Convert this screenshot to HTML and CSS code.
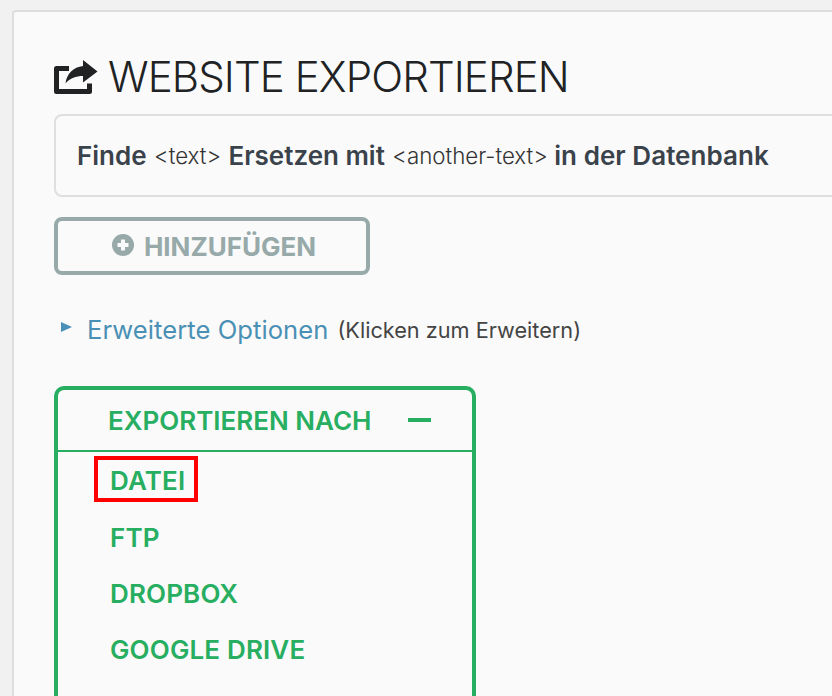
FILE: index.html
```html
<!DOCTYPE html>
<html lang="de">
<head>
<meta charset="utf-8">
<title>Website exportieren</title>
<link rel="stylesheet" href="styles.css">
</head>
<body>
<main class="card">
  <h1 class="title">
    <svg class="title-icon" viewBox="0 0 44 34" aria-hidden="true">
      <path class="share-frame" d="M15 8.500H2.500V31.500H35.500V23.500" />
      <path class="share-arrow" d="M29 0L43.500 11.500L29 22.500V16C22 16 16 18 11.500 23.500C12.500 14 19.500 7 29 6Z" />
    </svg>
    <span>WEBSITE EXPORTIEREN</span>
  </h1>
  <div class="find-box"><b>Finde</b> <small>&lt;text&gt;</small> <b>Ersetzen mit</b> <small>&lt;another-text&gt;</small> <b class="last">in der Datenbank</b></div>
  <button class="add-btn" type="button">
    <svg class="plus" viewBox="0 0 22 22" aria-hidden="true">
      <circle cx="11" cy="11" r="11" />
      <path d="M11 5.500V16.500M5.500 11H16.500" />
    </svg>
    HINZUFÜGEN
  </button>
  <div class="advanced">
    <span class="caret"></span>
    <a class="adv-link">Erweiterte Optionen</a>
    <span class="adv-hint">(Klicken zum Erweitern)</span>
  </div>
  <section class="export">
    <div class="export-head">
      <span>EXPORTIEREN NACH</span>
      <span class="minus"></span>
    </div>
    <ul class="export-list">
      <li><span class="marked">DATEI</span></li>
      <li><span>FTP</span></li>
      <li><span>DROPBOX</span></li>
      <li><span>GOOGLE DRIVE</span></li>
    </ul>
  </section>
</main>
</body>
</html>
```
FILE: styles.css
```css
* { box-sizing: border-box; }
html, body { height: 100%; }
body {
  margin: 0;
  padding: 10px 0 0 12px;
  background: #f1f1f1;
  font-family: Inter, "Noto Sans", sans-serif;
  overflow: hidden;
}
.card {
  width: 900px;
  height: 800px;
  padding: 30px 0 0 40px;
  background: #fafafa;
  border: 2px solid #dedede;
  border-radius: 4px;
}
.title {
  display: flex;
  align-items: center;
  gap: 10px;
  height: 72px;
  margin: 0;
  padding-bottom: 3px;
  font-size: 42px;
  font-weight: 300;
  letter-spacing: -0.900px;
  color: #202224;
}
.title-icon { width: 44px; height: 34px; flex: none; margin-top: 1px; }
.share-frame { fill: none; stroke: #202224; stroke-width: 5; stroke-linejoin: round; }
.share-arrow { fill: #202224; }
.find-box {
  width: 900px;
  height: 83px;
  padding: 0 21px;
  display: flex;
  align-items: center;
  gap: 7.500px;
  background: #fafafa;
  border: 2px solid #dfdfdf;
  border-radius: 8px;
  color: #3a434b;
  font-size: 26px;
  white-space: nowrap;
}
.find-box b { font-weight: 600; }
.find-box small { font-size: 22.300px; font-weight: 300; color: #333; }
.find-box .last { margin-left: -1px; letter-spacing: 0.050px; }
.add-btn {
  display: flex;
  align-items: center;
  justify-content: center;
  gap: 10px;
  width: 316px;
  height: 58px;
  margin-top: 20px;
  padding: 0 0 0 4px;
  background: transparent;
  border: 4px solid #97a9a9;
  border-radius: 8px;
  color: #97a9a9;
  font: 700 26px Inter, sans-serif;
}
.plus { width: 22px; height: 22px; margin-top: -3px; }
.plus circle { fill: #97a9a9; }
.plus path { stroke: #fafafa; stroke-width: 4; fill: none; }
.advanced {
  display: flex;
  align-items: center;
  height: 30px;
  margin: 39px 0 0 7px;
}
.caret {
  width: 0;
  height: 0;
  margin: -4px 16px 0 0;
  border-left: 11px solid #4a90b8;
  border-top: 5.500px solid transparent;
  border-bottom: 5.500px solid transparent;
}
.adv-link { margin-left: -1px; font-size: 25.600px; letter-spacing: 0.050px; color: #4a90b5; }
.adv-hint { margin: 2px 0 0 9px; font-size: 21.700px; color: #444; }
.export {
  width: 422px;
  height: 400px;
  margin-top: 42px;
  border: 4px solid #27ae60;
  border-radius: 10px;
  color: #27ae60;
  font-size: 26px;
  font-weight: 600;
}
.export-head {
  display: flex;
  align-items: center;
  gap: 37px;
  height: 62px;
  padding: 0 0 0 50px;
  border-bottom: 2px solid #27ae60;
}
.minus { width: 23px; height: 4px; background: #27ae60; }
.export-list { list-style: none; margin: 0; padding: 4px 0 0 36px; letter-spacing: 0.150px; }
.export-list li { height: 56px; display: flex; align-items: center; }
.export-list span { display: inline-block; padding: 0 12px 0 16px; }
.export-list li:first-child { height: 46px; margin-bottom: 7px; }
.marked { border: 4px solid #f00; padding: 2px 9px 0 12px !important; line-height: 38px; height: 46px; }
```
